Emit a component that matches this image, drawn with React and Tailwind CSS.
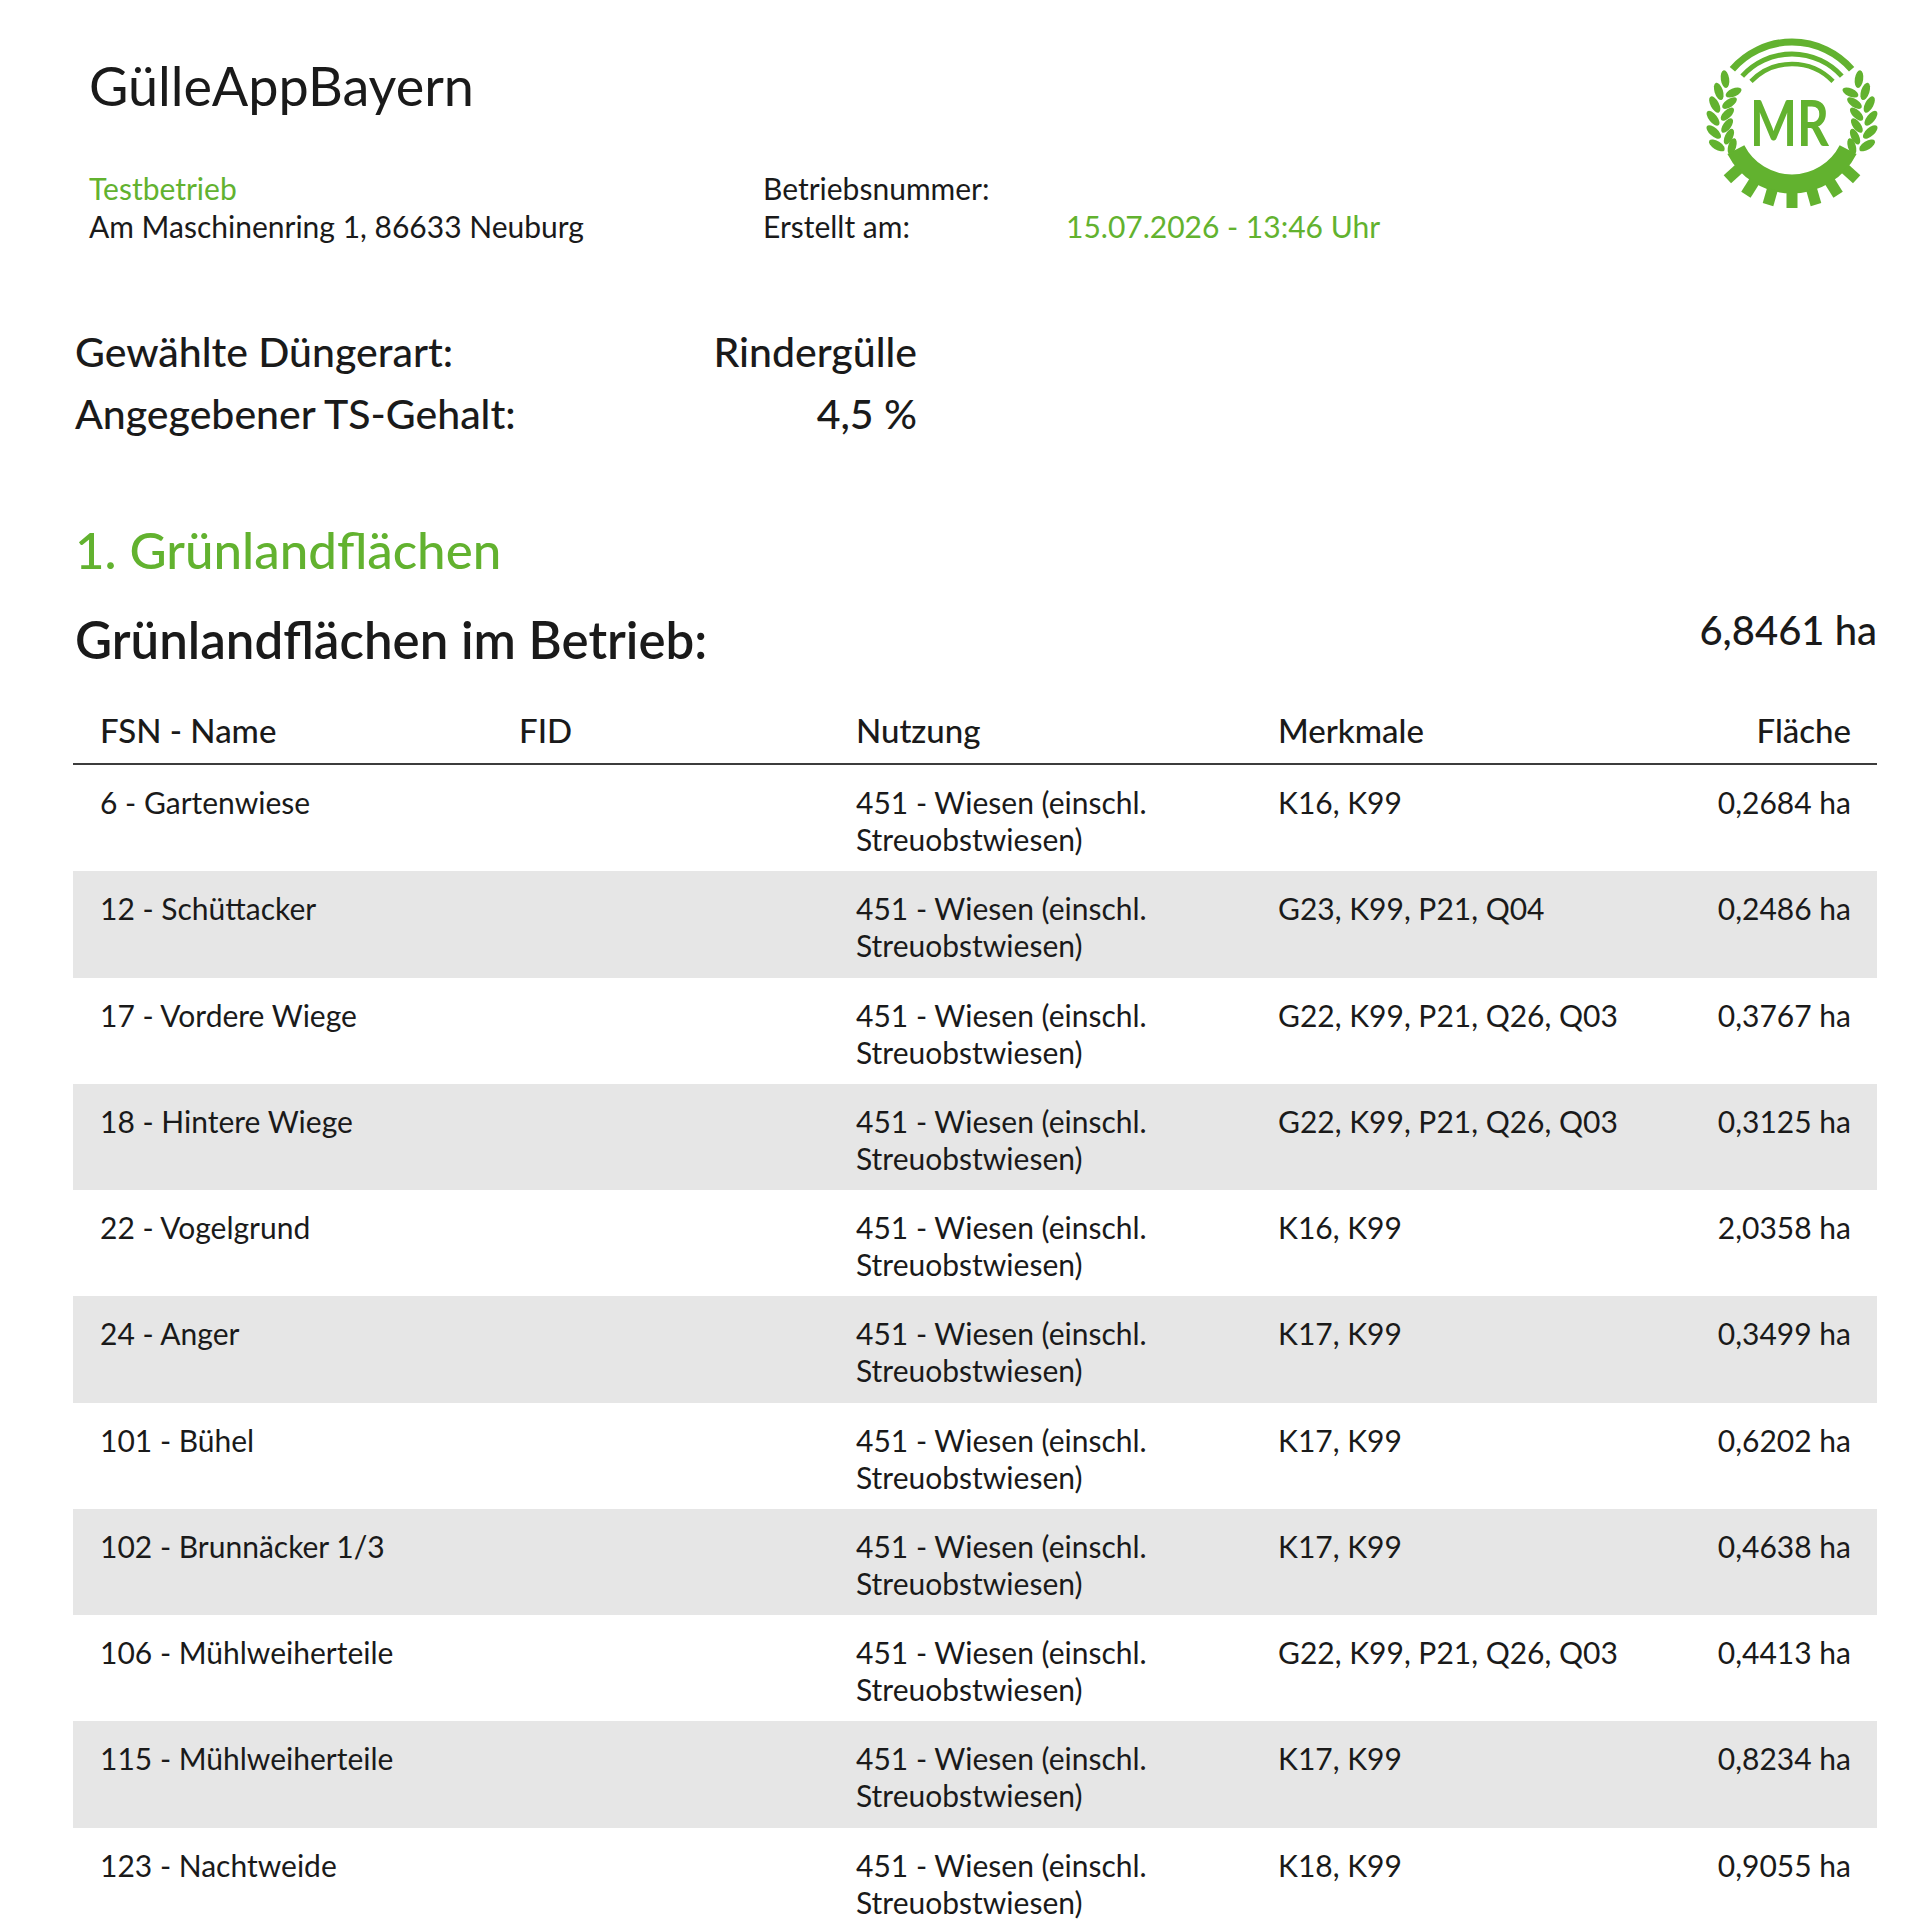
import React from "react";

const GREEN = "#62b22f";

const rows = [
  { name: "6 - Gartenwiese", merkmale: "K16, K99", flaeche: "0,2684 ha" },
  { name: "12 - Schüttacker", merkmale: "G23, K99, P21, Q04", flaeche: "0,2486 ha" },
  { name: "17 - Vordere Wiege", merkmale: "G22, K99, P21, Q26, Q03", flaeche: "0,3767 ha" },
  { name: "18 - Hintere Wiege", merkmale: "G22, K99, P21, Q26, Q03", flaeche: "0,3125 ha" },
  { name: "22 - Vogelgrund", merkmale: "K16, K99", flaeche: "2,0358 ha" },
  { name: "24 - Anger", merkmale: "K17, K99", flaeche: "0,3499 ha" },
  { name: "101 - Bühel", merkmale: "K17, K99", flaeche: "0,6202 ha" },
  { name: "102 - Brunnäcker 1/3", merkmale: "K17, K99", flaeche: "0,4638 ha" },
  { name: "106 - Mühlweiherteile", merkmale: "G22, K99, P21, Q26, Q03", flaeche: "0,4413 ha" },
  { name: "115 - Mühlweiherteile", merkmale: "K17, K99", flaeche: "0,8234 ha" },
  { name: "123 - Nachtweide", merkmale: "K18, K99", flaeche: "0,9055 ha" },
];

// polar helper, angle in degrees measured clockwise from the top
const pt = (cx, cy, r, deg) => {
  const a = (deg * Math.PI) / 180;
  return [cx + r * Math.sin(a), cy - r * Math.cos(a)];
};

const arc = (cx, cy, r, from, to) => {
  const [x1, y1] = pt(cx, cy, r, from);
  const [x2, y2] = pt(cx, cy, r, to);
  const large = to - from > 180 ? 1 : 0;
  return `M ${x1} ${y1} A ${r} ${r} 0 ${large} 1 ${x2} ${y2}`;
};

const MrLogo = () => {
  const cx = 86;
  const cy = 83;
  const outer = [58, 68, 78, 88, 98, 108];
  const inner = [64, 74, 84, 94, 104, 113];
  const teeth = [132, 148, 164, 180, 196, 212, 228];

  const ear = (
    <g>
      {outer.map((d) => {
        const [x, y] = pt(cx, cy, 79, d);
        return <ellipse key={"o" + d} cx={x} cy={y} rx="9" ry="4.2" transform={`rotate(${d + 40} ${x} ${y})`} />;
      })}
      {inner.map((d) => {
        const [x, y] = pt(cx, cy, 65, d);
        return <ellipse key={"i" + d} cx={x} cy={y} rx="8.5" ry="4" transform={`rotate(${d - 40} ${x} ${y})`} />;
      })}
    </g>
  );

  return (
    <svg width="172" height="170" viewBox="0 0 172 170">
      <g fill="none" stroke={GREEN} strokeLinecap="butt">
        <path d={arc(cx, cy, 79, -49, 49)} strokeWidth="7" />
        <path d={arc(cx, cy, 67, -48, 48)} strokeWidth="5" />
        <path d={arc(cx, cy, 57, -46, 46)} strokeWidth="4.5" />
        <path d={arc(cx, cy, 63, 117, 243)} strokeWidth="19" />
      </g>
      <g fill={GREEN}>
        {/* Zahnrad-Zähne */}
        {teeth.map((d) => {
          const [x, y] = pt(cx, cy, 79, d);
          return <rect key={d} x={x - 5.5} y={y - 8} width="11" height="16" transform={`rotate(${d} ${x} ${y})`} />;
        })}
        {ear}
        <g transform={`translate(${2 * cx} 0) scale(-1 1)`}>{ear}</g>
        <text
          x="44"
          y="108"
          fontSize="64"
          fontWeight="700"
          fontFamily="Lato, sans-serif"
          textLength="79"
          lengthAdjust="spacingAndGlyphs"
        >
          MR
        </text>
      </g>
    </svg>
  );
};

const cols = "grid grid-cols-[419px_337px_422px_400px_1fr]";

export default function App() {
  return (
    <div className="w-[1920px] h-[1927px] overflow-hidden bg-white font-['Lato',sans-serif] text-[#1a1a1a]">
      {/* Kopfbereich */}
      <div className="flex items-start justify-between pr-[42px]">
        <div className="pl-[89px] pt-[54px]">
          <h1 className="text-[54px] leading-[64px]">GülleAppBayern</h1>
          <div className="mt-[51px] grid grid-cols-[674px_303px_auto] text-[30px] leading-[38px]">
            <div className="text-[#62b22f]">Testbetrieb</div>
            <div>Betriebsnummer:</div>
            <div></div>
            <div>Am Maschinenring 1, 86633 Neuburg</div>
            <div>Erstellt am:</div>
            <div className="text-[#62b22f]">15.07.2026 - 13:46 Uhr</div>
          </div>
        </div>
        <div className="mt-[38px]">
          <MrLogo />
        </div>
      </div>

      <div className="pl-[75px] pr-[43px]">
        {/* Düngerart */}
        <div className="mt-[76px] grid w-[842px] grid-cols-[1fr_auto] text-[41px] font-medium leading-[62px]">
          <div>Gewählte Düngerart:</div>
          <div className="text-right">Rindergülle</div>
          <div>Angegebener TS-Gehalt:</div>
          <div className="text-right">4,5 %</div>
        </div>

        <h2 className="mt-[77px] text-[51px] font-medium leading-[56px] text-[#62b22f]">1. Grünlandflächen</h2>

        <div className="mt-[34px] flex items-start justify-between">
          <h3 className="text-[51px] font-semibold leading-[56px]">Grünlandflächen im Betrieb:</h3>
          <div className="mt-[-6px] text-[40px] font-medium leading-[48px]">6,8461 ha</div>
        </div>
      </div>

      {/* Tabelle */}
      <div className="ml-[73px] mt-[32px] w-[1804px] text-[30px] leading-[37px]">
        <div className={cols + " h-[65px] items-center border-b-[2.5px] border-[#3c3c3c] pb-[2px] text-[33px] font-medium"}>
          <div className="pl-[27px]">FSN - Name</div>
          <div className="pl-[27px]">FID</div>
          <div className="pl-[27px]">Nutzung</div>
          <div className="pl-[27px]">Merkmale</div>
          <div className="pr-[26px] text-right">Fläche</div>
        </div>
        {rows.map((r, i) => (
          <div
            key={r.name}
            className={cols + " h-[106.25px] pt-[19px] " + (i % 2 === 1 ? "bg-[#e6e6e6]" : "bg-white")}
          >
            <div className="pl-[27px]">{r.name}</div>
            <div className="pl-[27px]"></div>
            <div className="pl-[27px] pr-[27px]">451 - Wiesen (einschl. Streuobstwiesen)</div>
            <div className="pl-[27px]">{r.merkmale}</div>
            <div className="pr-[26px] text-right">{r.flaeche}</div>
          </div>
        ))}
      </div>
    </div>
  );
}
